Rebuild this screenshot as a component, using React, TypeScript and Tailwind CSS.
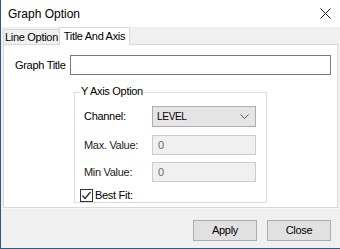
export default function App() {
  return (
    <div className="w-[340px] h-[249px] bg-[#f0f0f0] border-l border-b border-[#2b5a8a] flex flex-col font-['Liberation_Sans',Arial,sans-serif] text-[11px] tracking-[-0.3px] text-black overflow-hidden">
      {/* title bar */}
      <div className="h-[27px] bg-white flex items-center justify-between pl-[7px] pr-[8px] shrink-0">
        <span className="text-[12px] tracking-normal">Graph Option</span>
        <svg width="11" height="11" viewBox="0 0 11 11" className="mr-[1px]">
          <path d="M0.5 0.5 L10.5 10.5 M10.5 0.5 L0.5 10.5" stroke="#222" strokeWidth="1" />
        </svg>
      </div>

      {/* tabs */}
      <div className="flex items-end h-[17px] pl-[2px] shrink-0">
        <div className="w-[57px] h-[15px] border border-b-0 border-[#d9d9d9] bg-[#f0f0f0] flex items-center justify-center leading-none whitespace-nowrap">
          Line Option
        </div>
        <div className="w-[71px] h-[18px] border border-b-0 border-[#d9d9d9] bg-white flex items-center justify-center leading-none -ml-[1px] relative z-10 -mb-[1px] whitespace-nowrap">
          Title And Axis
        </div>
      </div>

      {/* tab panel */}
      <div className="mx-[2px] h-[164px] bg-white border border-[#d9d9d9] shrink-0 flex flex-col">
        <div className="flex items-center mt-[10px] pl-[11px] pr-[6px]">
          <span className="whitespace-nowrap">Graph Title</span>
          <div className="ml-auto w-[261px] h-[20px] border border-[#7a7a7a] bg-white" />
        </div>

        <div className="relative ml-[70px] mt-[17px] w-[193px] h-[111px] border border-[#dcdcdc]">
          <span className="absolute -top-[7px] left-[5px] bg-white px-[1px] leading-none whitespace-nowrap">Y Axis Option</span>
          <div className="flex flex-col pl-[9px] pt-[13px]">
            <div className="flex items-center">
              <span className="w-[68px]">Channel:</span>
              <div className="w-[104px] h-[21px] border border-[#adadad] bg-[#e5e5e5] flex items-center justify-between pl-[4px] pr-[6px]">
                <span className="text-[10px]">LEVEL</span>
                <svg width="9" height="6" viewBox="0 0 9 6">
                  <path d="M0.5 0.5 L4.5 4.5 L8.5 0.5" stroke="#555" strokeWidth="1" fill="none" />
                </svg>
              </div>
            </div>
            <div className="flex items-center mt-[8px]">
              <span className="w-[68px] text-[#222]">Max. Value:</span>
              <div className="w-[104px] h-[20px] border border-[#cccccc] bg-[#f0f0f0] flex items-center pl-[5px] text-[#6d6d6d]">0</div>
            </div>
            <div className="flex items-center mt-[7px]">
              <span className="w-[68px] text-[#222]">Min Value:</span>
              <div className="w-[104px] h-[20px] border border-[#cccccc] bg-[#f0f0f0] flex items-center pl-[5px] text-[#6d6d6d]">0</div>
            </div>
          </div>
          <div className="flex items-center ml-[5px] mt-[5px] gap-[2px]">
            <div className="w-[13px] h-[13px] border border-[#333] bg-white flex items-center justify-center">
              <svg width="11" height="11" viewBox="0 0 11 11">
                <path d="M1.5 5.5 L4 8.5 L9.5 2" stroke="#222" strokeWidth="1.2" fill="none" />
              </svg>
            </div>
            <span>Best Fit:</span>
          </div>
        </div>
      </div>

      {/* bottom buttons */}
      <div className="flex justify-end gap-[10px] pr-[9px] pt-[11px] border-t border-[#f8f8f8]">
        <button className="w-[64px] h-[21px] bg-[#e1e1e1] border border-[#adadad] text-[11px] leading-none">Apply</button>
        <button className="w-[64px] h-[21px] bg-[#e1e1e1] border border-[#adadad] text-[11px] leading-none">Close</button>
      </div>
    </div>
  );
}
